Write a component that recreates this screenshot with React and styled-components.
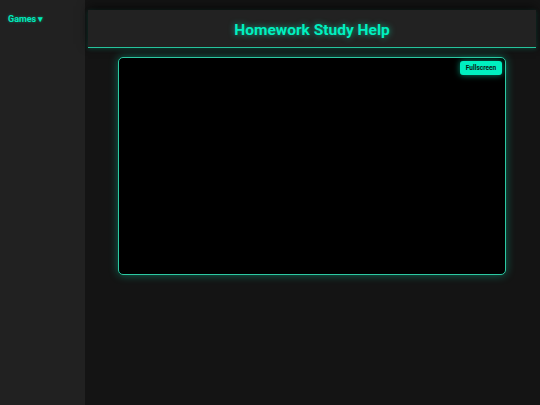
import styled, { createGlobalStyle } from "styled-components";

const Global = createGlobalStyle`
  html, body {
    margin: 0;
    padding: 0;
    height: 100%;
    background: #141414;
    font-family: Roboto, "Liberation Sans", sans-serif;
  }
  #root {
    height: 100%;
  }
`;

const Layout = styled.div`
  display: flex;
  height: 405px;
`;

const Sidebar = styled.aside`
  width: 85px;
  flex-shrink: 0;
  background: #212121;
  padding: 14px 8px;
  box-sizing: border-box;
`;

const MenuToggle = styled.div`
  color: #00e8bb;
  font-weight: 700;
  font-size: 9px;
  cursor: pointer;
  text-shadow: 0 0 3px rgba(0, 255, 200, 0.4);
`;

const Main = styled.main`
  flex: 1;
  display: flex;
  flex-direction: column;
  align-items: center;
  padding: 10px 4px 0 3px;
  box-sizing: border-box;
  background: #141414;
`;

const Header = styled.header`
  width: 100%;
  height: 38px;
  box-sizing: border-box;
  padding-top: 2px;
  background: #222;
  border-bottom: 1.5px solid #25c39c;
  box-shadow: 0 -4px 10px rgba(0, 0, 0, 0.5), 0 1px 4px rgba(0, 220, 170, 0.25);
  display: flex;
  align-items: center;
  justify-content: center;
`;

const Title = styled.h1`
  margin: 0;
  color: #00f0c0;
  font-size: 15.5px;
  font-weight: 700;
  text-shadow: 0 0 6px rgba(0, 255, 200, 0.6);
`;

const GameFrame = styled.div`
  position: relative;
  margin-top: 9px;
  width: 388px;
  height: 218px;
  box-sizing: border-box;
  background: #000;
  border: 1.5px solid #2cc9a2;
  border-radius: 5px;
  box-shadow: 0 0 10px rgba(0, 230, 180, 0.4);
`;

const FullscreenButton = styled.button`
  position: absolute;
  top: 3px;
  right: 3px;
  width: 42px;
  height: 14px;
  padding: 0;
  border: none;
  border-radius: 3px;
  background: #00f0c0;
  color: #0b1a16;
  font-family: Roboto, "Liberation Sans", sans-serif;
  font-size: 6.5px;
  font-weight: 700;
  cursor: pointer;
  box-shadow: 0 0 6px rgba(0, 255, 200, 0.55);
`;

const App = () => {
  return (
    <>
      <Global />
      <Layout>
        <Sidebar>
          <MenuToggle>Games ▾</MenuToggle>
        </Sidebar>
        <Main>
          <Header>
            <Title>Homework Study Help</Title>
          </Header>
          <GameFrame>
            <FullscreenButton>Fullscreen</FullscreenButton>
          </GameFrame>
        </Main>
      </Layout>
    </>
  );
};

export default App;
